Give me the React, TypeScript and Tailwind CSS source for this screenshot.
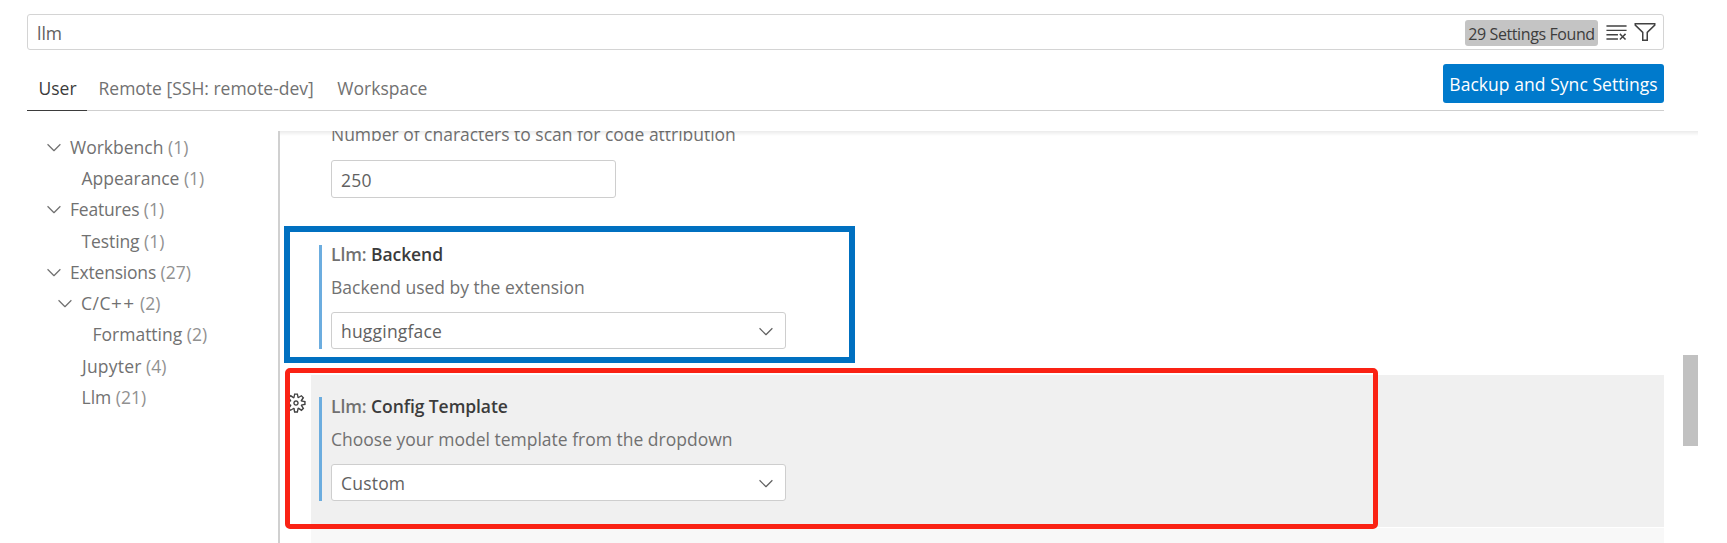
import type { ReactNode } from 'react';
import { VscChevronDown, VscClearAll, VscFilter, VscGear } from 'react-icons/vsc';

type TreeNode = { label: string; suffix?: string; count: number; pad: string; open?: boolean; tracking?: string };

const tree: TreeNode[] = [
  { label: 'Workbench', count: 1, pad: 'pl-[43px]', open: true },
  { label: 'Appearance', count: 1, pad: 'pl-[81.5px]' },
  { label: 'Features', count: 1, pad: 'pl-[43px]', open: true, tracking: 'tracking-[-0.2px]' },
  { label: 'Testing', count: 1, pad: 'pl-[81.5px]', tracking: 'tracking-[-0.1px]' },
  { label: 'Extensions', count: 27, pad: 'pl-[43px]', open: true, tracking: 'tracking-[-0.2px]' },
  { label: 'C/C', suffix: '++', count: 2, pad: 'pl-[54px]', open: true, tracking: 'tracking-[0.5px]' },
  { label: 'Formatting', count: 2, pad: 'pl-[92.5px]' },
  { label: 'Jupyter', count: 4, pad: 'pl-[82px]', tracking: 'tracking-[0.2px]' },
  { label: 'Llm', count: 21, pad: 'pl-[81.5px]' },
];

function Tree() {
  return (
    <nav className="w-[278px] shrink-0 text-[#717171]">
      {tree.map((node) => (
        <div key={node.label} className={`flex h-[31.3px] items-center whitespace-pre ${node.pad}`}>
          {node.open && <VscChevronDown className="mr-[5px] size-[22px] shrink-0" />}
          <span className={node.tracking}>{node.label}</span>
          {node.suffix && <span className="text-[19px] tracking-[1.4px]">{node.suffix}</span>}
          <span className="text-[#919191]"> ({node.count})</span>
        </div>
      ))}
    </nav>
  );
}

function Select({ value }: { value: string }) {
  return (
    <div className="flex h-[37px] w-[455px] items-center justify-between rounded-[3px] border border-[#cecece] bg-white pr-[8px] pl-[9px] tracking-[0.2px] text-[#616161]">
      <span>{value}</span>
      <VscChevronDown className="size-[22px] text-[#616161]" />
    </div>
  );
}

function Setting({ name, description, children }: { name: string; description: string; children: ReactNode }) {
  return (
    <div className="flex h-[104px] border-l-3 border-[#6caddf] pl-[9px]">
      <div>
        <div className="h-[33px] leading-[18px] font-semibold tracking-[-0.08px] whitespace-pre text-[#3b3b3b]">
          <span className="text-[#717171]">Llm:</span> {name}
        </div>
        <div className="h-[34px] leading-[18px] text-[#717171]">{description}</div>
        {children}
      </div>
    </div>
  );
}

export default function App() {
  return (
    <div className="relative flex h-[543px] w-[1727px] flex-col overflow-hidden bg-white font-['Open_Sans',sans-serif] text-[17.5px] leading-[24px] text-[#717171]">
      <header className="ml-[27px] w-[1637px] pt-[14px]">
        <div className="flex h-[36px] items-center rounded-[3px] border border-[#d4d4d4] pr-[6px] pl-[9px]">
          <span className="flex-1 pt-[2px] text-[#616161]">llm</span>
          <span className="mt-px mr-[7px] flex h-[26px] w-[133px] items-center justify-center rounded-[3px] bg-[#c4c4c4] pt-[2px] text-[16px] tracking-[-0.4px] text-[#3d3d3d]">
            29 Settings Found
          </span>
          <VscClearAll className="mr-[5px] size-[23px] text-[#424242]" />
          <VscFilter className="size-[24px] text-[#424242]" />
        </div>
        <div className="mt-[14px] flex h-[47px] items-start justify-between border-b border-[#cfcfcf]">
          <div className="flex h-[47px]">
            <div className="w-[60px] border-b border-[#3b3b3b] pt-[12px] pl-px text-center text-[#3b3b3b]">User</div>
            <div className="pt-[12px] pl-[11.5px]">Remote [SSH: remote-dev]</div>
            <div className="pt-[12px] pl-[23.5px]">Workspace</div>
          </div>
          <button className="flex h-[39px] w-[221px] items-center justify-center rounded-[3px] bg-[#007acc] tracking-[0.05px] text-white">
            Backup and Sync Settings
          </button>
        </div>
      </header>
      <div className="mt-[20px] flex flex-1 overflow-hidden">
        <Tree />
        <main className="relative h-[412px] w-[1420px] overflow-hidden border-l-2 border-[#d0d0d0]">
          <div className="-mt-[9px] h-[101px] pl-[51px]">
            <div className="h-[38px] leading-[24px] tracking-[-0.02px]">Number of characters to scan for code attribution</div>
            <div className="flex h-[38px] w-[285px] items-center rounded-[3px] border border-[#cecece] pt-px pl-[9px] tracking-[0.2px] text-[#616161]">
              250
            </div>
          </div>
          <div className="h-[152px] pt-[22px] pl-[39px]">
            <Setting name="Backend" description="Backend used by the extension">
              <Select value="huggingface" />
            </Setting>
          </div>
          <div className="ml-[31px] h-[152px] w-[1353px] bg-[#f0f0f0] pt-[22px] pl-[8px]">
            <Setting name="Config Template" description="Choose your model template from the dropdown">
              <Select value="Custom" />
            </Setting>
          </div>
          <div className="mt-px ml-[31px] h-[16px] w-[1353px] bg-[#f8f8f8]" />
          <VscGear className="absolute top-[261px] left-[5px] size-[22px] text-[#424242]" />
          <div className="absolute top-0 left-0 h-[5px] w-full bg-gradient-to-b from-black/8 to-transparent" />
          <div className="absolute top-[224px] right-0 h-[91px] w-[15px] bg-[#c1c1c1]" />
        </main>
      </div>
      <div className="absolute top-[226px] left-[284px] h-[137px] w-[571px] border-6 border-[#0070c0]" />
      <div className="absolute top-[368px] left-[284.5px] h-[161px] w-[1093px] rounded-[5px] border-5 border-[#fa2214]" />
    </div>
  );
}
